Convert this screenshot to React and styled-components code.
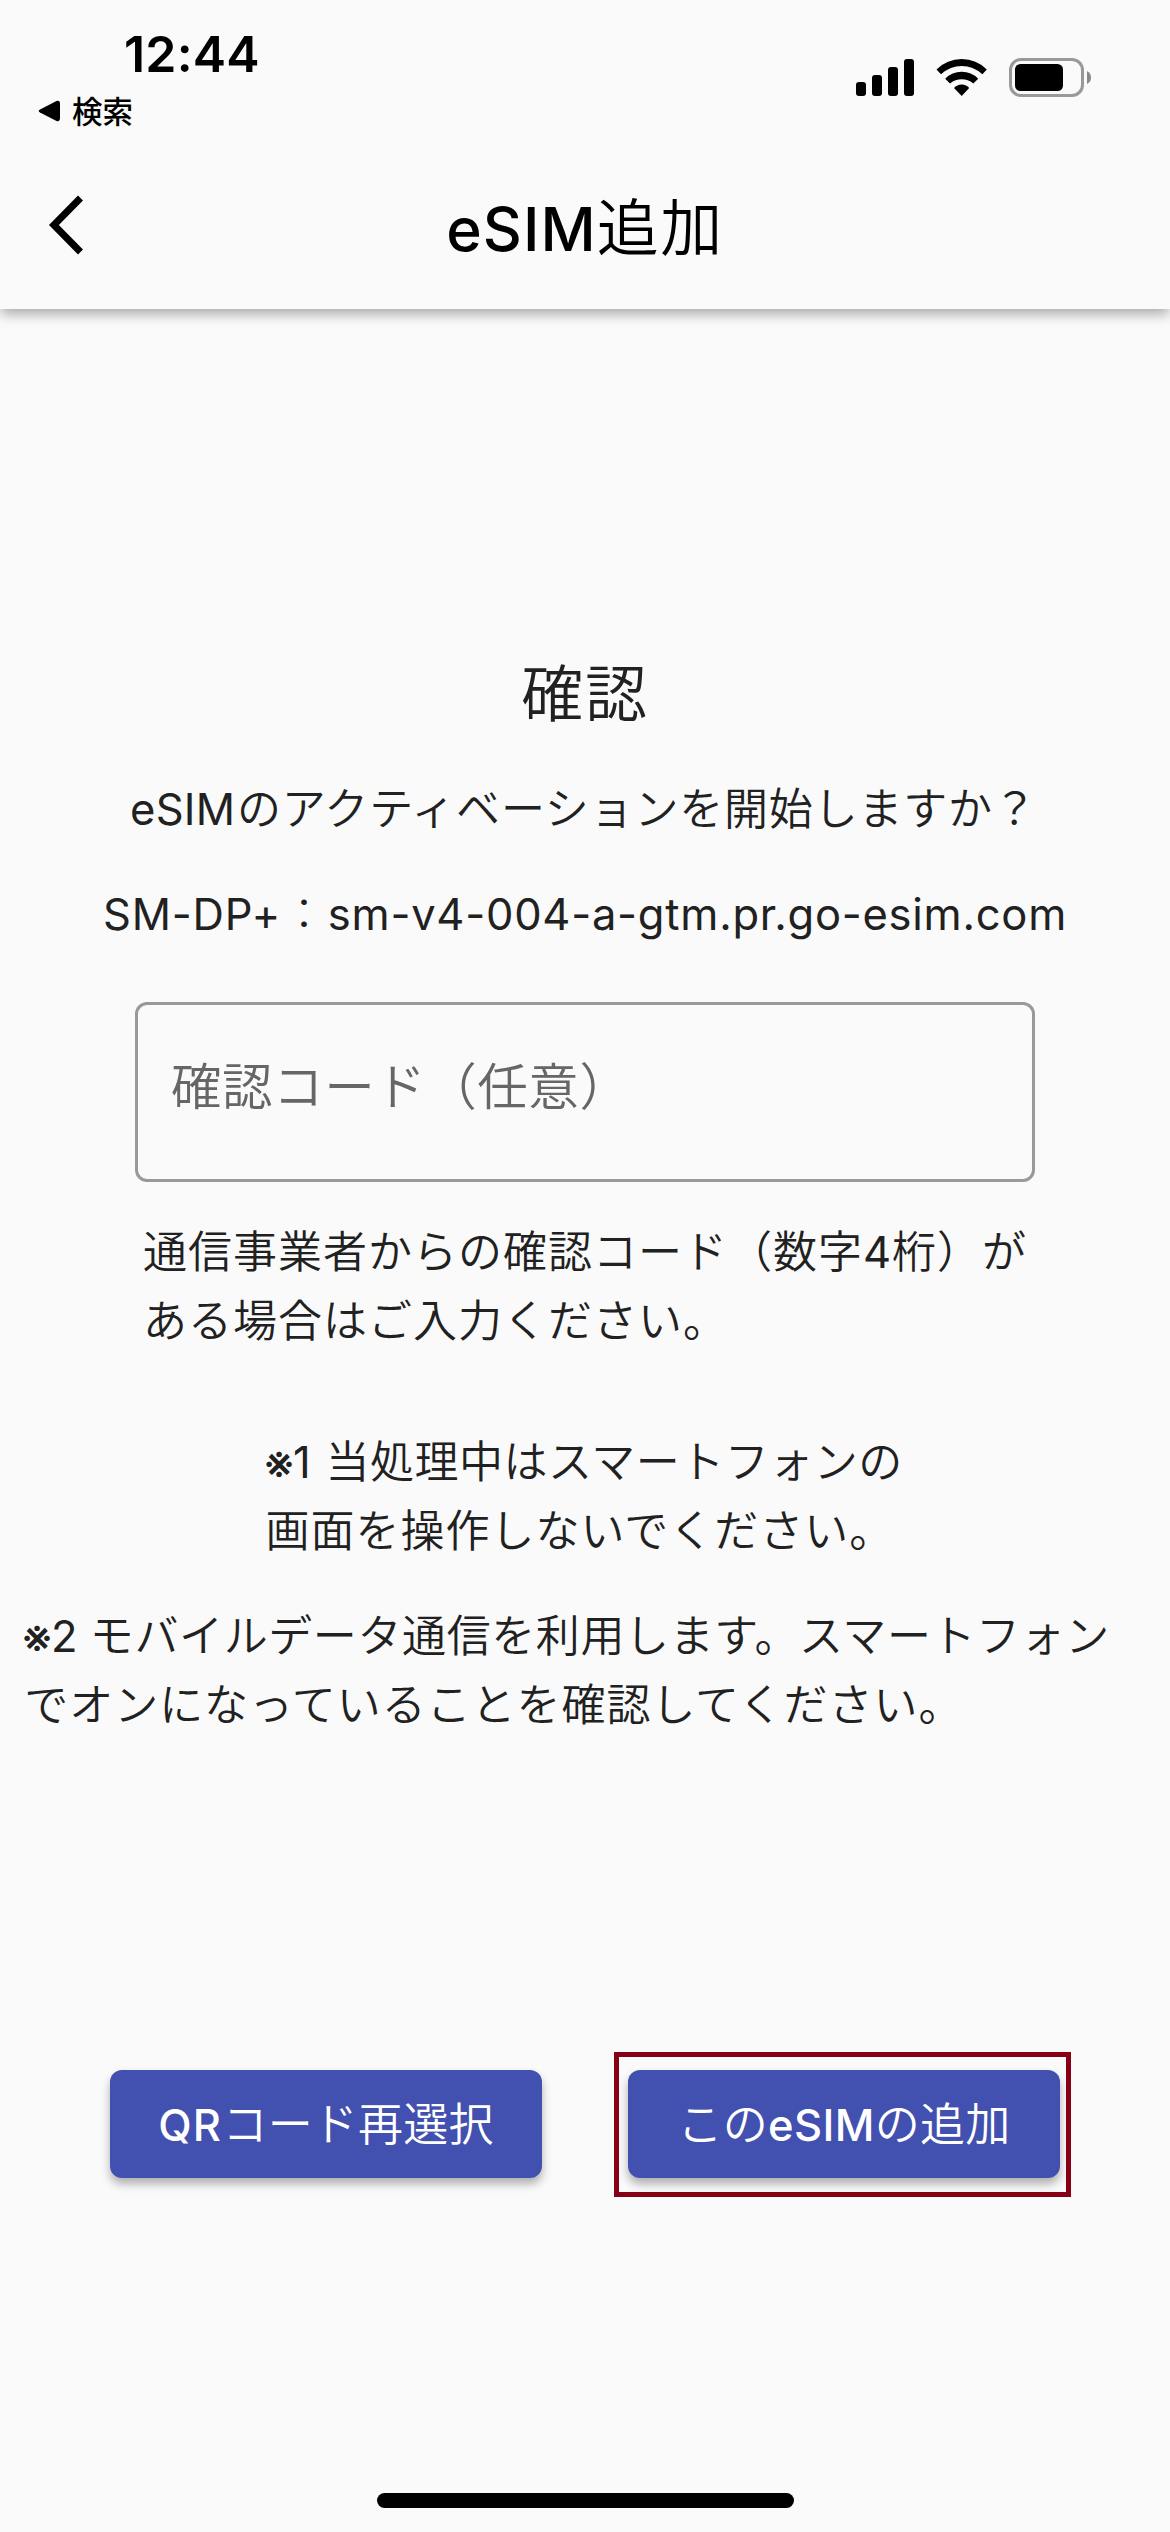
import React from "react";
import styled, { createGlobalStyle } from "styled-components";

const Global = createGlobalStyle`
  *, *::before, *::after { box-sizing: border-box; }
  body { margin: 0; background: #fafafa; }
`;

const jp = '"Noto Sans CJK JP", sans-serif';
const latin = 'Inter, "Noto Sans CJK JP", sans-serif';

const Page = styled.div`
  display: flex;
  flex-direction: column;
  width: 1170px;
  height: 2532px;
  overflow: hidden;
  background: #fafafa;
  color: #212121;
  font-family: ${jp};
  font-weight: 350;
`;

const TopBar = styled.header`
  flex: none;
  height: 309px;
  background: #fafafa;
  color: #000;
  box-shadow: 0 6px 12px -1px rgba(0, 0, 0, 0.33);
`;

const StatusBar = styled.div`
  display: flex;
  justify-content: space-between;
  height: 140px;
  padding: 24px 78px 0 38px;
`;

const StatusLeft = styled.div`
  display: flex;
  flex-direction: column;
`;

const Clock = styled.div`
  padding-left: 86px;
  font: 600 50px/60px ${latin};
  letter-spacing: 0.2px;
`;

const BackToApp = styled.div`
  display: flex;
  align-items: center;
  gap: 12px;
  height: 54px;
`;

const BackToAppLabel = styled.span`
  padding-bottom: 2px;
  font-size: 30.5px;
  font-weight: 500;
  line-height: 52px;
`;

const StatusIcons = styled.svg`
  width: 238px;
  height: 44px;
  margin-top: 32px;
`;

const Toolbar = styled.div`
  display: grid;
  grid-template-columns: 160px 1fr 160px;
  align-items: center;
  height: 169px;
`;

const BackButton = styled.button`
  display: flex;
  padding: 0 0 0 44px;
  border: 0;
  background: none;
  color: inherit;
`;

const Title = styled.h1`
  margin: 0;
  padding-bottom: 2px;
  font-size: 62px;
  font-weight: 350;
  line-height: 90px;
  letter-spacing: 1.5px;
  text-align: center;
  white-space: nowrap;
`;

const Latin = styled.span`
  margin-right: ${(p) => p.$gap || 0}px;
  font-family: ${latin};
  font-size: ${(p) => p.$size || 43.5}px;
  font-weight: ${(p) => p.$weight || 400};
  letter-spacing: ${(p) => p.$spacing || 0}px;
  line-height: 1;
`;

const NoteMark = styled(Latin)`
  vertical-align: -2px;
`;

const Content = styled.main`
  flex: 1;
  display: flex;
  flex-direction: column;
  padding-top: 336px;
`;

const Heading = styled.h2`
  margin: 0 0 37px;
  font-size: 62px;
  font-weight: 350;
  line-height: 90px;
  letter-spacing: 1.7px;
  text-align: center;
`;

const Message = styled.p`
  margin: 0 0 ${(p) => p.$after}px;
  padding-left: ${(p) => p.$indent}px;
  font-size: 44px;
  line-height: 69px;
  letter-spacing: 0.8px;
  white-space: nowrap;
`;

const Line = styled.span`
  display: block;
  height: 69px;
  padding-left: ${(p) => p.$indent || 0}px;
  letter-spacing: ${(p) => p.$spacing}px;
`;

const Separator = styled.span`
  padding: 0 1px;
  font-weight: 300;
`;

const CodeInput = styled.input`
  width: 900px;
  height: 180px;
  margin: 0 135px 33px;
  padding: 0 33px 18px;
  border: 3px solid #999;
  border-radius: 12px;
  outline: 0;
  background: none;
  color: #212121;
  font: 350 50.5px ${jp};
  letter-spacing: 0.55px;
  &::placeholder {
    color: #666;
    opacity: 1;
  }
`;

const Actions = styled.div`
  display: flex;
  align-items: flex-start;
  gap: 72px;
  height: 145px;
  margin-top: 315px;
  padding-left: 110px;
`;

const Button = styled.button`
  width: 432px;
  height: 108px;
  margin-top: ${(p) => p.$top || 0}px;
  padding: 0 0 4px;
  border: 0;
  border-radius: 12px;
  background: #4250af;
  color: #fff;
  box-shadow: 0 6px 10px rgba(0, 0, 0, 0.3);
  font: 350 45px/64px ${jp};
  letter-spacing: 0.2px;
  white-space: nowrap;
`;

const Highlight = styled.div`
  width: 457px;
  height: 145px;
  padding: 13px 6px 0 9px;
  border: 5px solid #880015;
`;

const HomeIndicator = styled.div`
  flex: none;
  width: 417px;
  height: 15px;
  margin: 0 0 24px 377px;
  border-radius: 8px;
  background: #000;
`;

function Status() {
  return (
    <StatusBar>
      <StatusLeft>
        <Clock>12:44</Clock>
        <BackToApp>
          <svg width="22" height="22" viewBox="0 0 22 22">
            <path d="M2 9.5 18.5 1.1Q22 0 22 4V18Q22 22 18.5 20.9L2 12.5Q-.6 11 2 9.5Z" />
          </svg>
          <BackToAppLabel>検索</BackToAppLabel>
        </BackToApp>
      </StatusLeft>
      <StatusIcons viewBox="854 56 238 44">
        <rect x="856" y="82" width="10" height="14" rx="3" />
        <rect x="872" y="75" width="10" height="21" rx="3" />
        <rect x="888" y="67" width="10" height="29" rx="3" />
        <rect x="904" y="59" width="10" height="37" rx="3" />
        <path d="M936.5 69.5Q947 59 961.700 59T986.800 69.5L982.4 74.200Q973 66 961.700 66T941 74.200Z" />
        <path d="M945.2 78.7Q952 71.800 961.700 71.800T978.200 78.7L973.300 83.5Q968 79.300 961.700 79.300T950 83.5Z" />
        <path d="M954 88Q957 84.5 961.700 84.5T969.200 88L961.700 96Z" />
        <rect x="1010.5" y="59.5" width="72" height="36" rx="10.5" fill="none" stroke="#999" strokeWidth="3" />
        <rect x="1015" y="64" width="48" height="27" rx="5.5" />
        <path d="M1087 71Q1091 73 1091 77.5T1087 84Z" fill="#888" />
      </StatusIcons>
    </StatusBar>
  );
}

export default function App() {
  return (
    <>
      <Global />
      <Page>
        <TopBar>
          <Status />
          <Toolbar>
            <BackButton aria-label="戻る">
              <svg width="44" height="64" viewBox="0 0 44 64" fill="none" stroke="#000" strokeWidth="7">
                <path d="M36.5 5 9.9 32 36.5 59" />
              </svg>
            </BackButton>
            <Title>
              <Latin $size={60.5} $weight={500} $spacing={1}>eSIM</Latin>追加
            </Title>
          </Toolbar>
        </TopBar>
        <Content>
          <Heading>確認</Heading>
          <Message $indent={130} $after={36}>
            <Latin $spacing={0.3} $gap={1.5}>eSIM</Latin>のアクティベーションを開始しますか？
          </Message>
          <Message $indent={103} $after={56}>
            <Latin $spacing={0.8}>SM-DP+</Latin>
            <Separator>：</Separator>
            <Latin $spacing={0.75}>sm-v4-004-a-gtm.pr.go-esim.com</Latin>
          </Message>
          <CodeInput placeholder="確認コード（任意）" />
          <Message $indent={143} $after={72}>
            <Line $spacing={1}>
              通信事業者からの確認コード（数字<Latin $gap={1}>4</Latin>桁）が
            </Line>
            <Line $spacing={1}>ある場合はご入力ください。</Line>
          </Message>
          <Message $indent={264} $after={36}>
            <Line $spacing={0.5}>
              <NoteMark $size={47} $spacing={-1}>※</NoteMark>
              <Latin $gap={2.5}>1 </Latin>当処理中はスマートフォンの
            </Line>
            <Line $indent={1.6} $spacing={1}>画面を操作しないでください。</Line>
          </Message>
          <Message $indent={22} $after={0}>
            <Line $spacing={0.6}>
              <NoteMark $size={47} $spacing={-1}>※</NoteMark>
              <Latin>2 </Latin>モバイルデータ通信を利用します。スマートフォン
            </Line>
            <Line $indent={2.3} $spacing={0.95}>でオンになっていることを確認してください。</Line>
          </Message>
          <Actions>
            <Button $top={18}>
              <Latin $weight={500} $spacing={1} $gap={0.5}>QR</Latin>コード再選択
            </Button>
            <Highlight>
              <Button>
                この<Latin $weight={500} $spacing={0.4}>eSIM</Latin>の追加
              </Button>
            </Highlight>
          </Actions>
        </Content>
        <HomeIndicator />
      </Page>
    </>
  );
}
